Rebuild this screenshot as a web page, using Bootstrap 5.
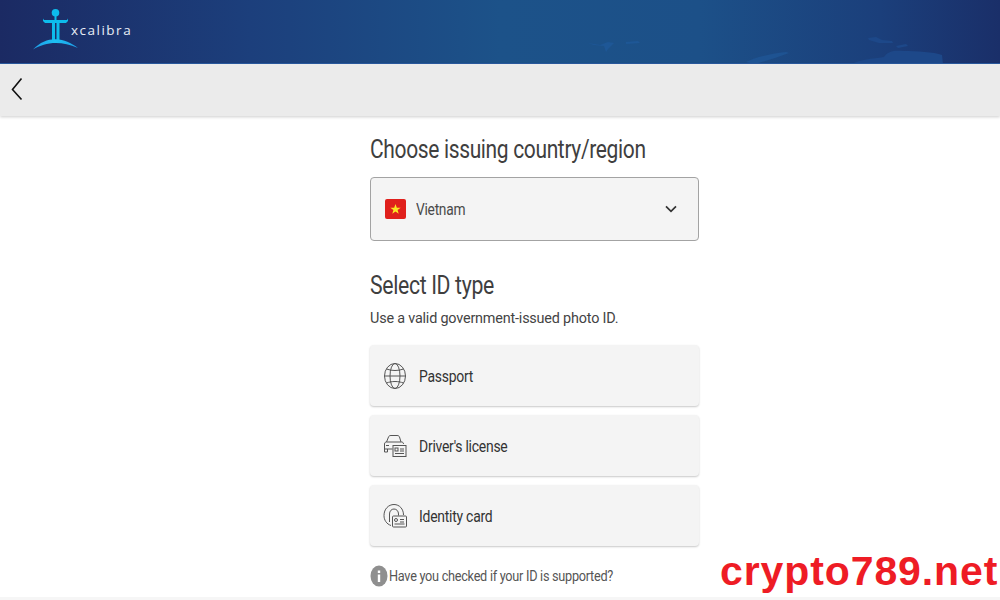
<!DOCTYPE html>
<html lang="en">
<head>
    <meta charset="UTF-8">
    <meta name="viewport" content="width=device-width, initial-scale=1.0">
    <title>Choose ID type</title>
    <link href="https://cdn.jsdelivr.net/npm/bootstrap@5.3.1/dist/css/bootstrap.min.css" rel="stylesheet">
    <style>
        html, body { height: 100%; overflow: hidden; }
        body { font-family: Roboto, "Open Sans", sans-serif; color: #3c3c3c; background: #fff; }
        .top-banner { height: 64px; background: linear-gradient(90deg, #1b2a63 0%, #1c3f7c 25%, #1c5289 50%, #1c5088 70%, #1b3f7b 88%, #1a2f69 100%); border-bottom: 1px solid #2a5aa0; overflow: hidden; }
        .brand-mark { margin-left: 32px; margin-top: 8px; }
        .brand-name { color: #e8eef6; font-family: "Open Sans", sans-serif; font-size: 13.5px; letter-spacing: 1.5px; margin-left: -11px; margin-top: 20px; }
        .banner-map { margin-left: auto; }
        .back-bar { height: 52px; background: #ebebeb; box-shadow: 0 1px 3px rgba(0,0,0,.2); padding-left: 11px; }
        .back-arrow { margin-bottom: 2px; }
        .id-column { width: 329px; margin-left: 370px; }
        .id-title { font-size: 25px; font-weight: 400; letter-spacing: -.42px; line-height: 32px; color: #3f3f3f; margin: 0; transform-origin: left center; white-space: nowrap; }
        .first-title { margin-top: 18px; transform: scaleX(.84); }
        .country-select { height: 64px; margin-top: 11px; background: #f4f4f4; border: 1px solid #a3a3a3; border-radius: 4px; padding: 0 21px 0 14px; font-size: 16px; letter-spacing: -.3px; color: #4a4a4a; }
        .flag-gap { margin-right: 10px; }
        .country-name { transform: scaleX(.86); transform-origin: left center; padding-top: 2px; }
        .second-title { margin-top: 29px; transform: scaleX(.85); }
        .id-hint { font-size: 15px; letter-spacing: -.2px; line-height: 20px; margin-top: 6px; color: #444; transform: scaleX(.96); transform-origin: left center; white-space: nowrap; }
        .id-options { margin-top: 17px; gap: 9px; }
        .id-option { height: 61px; background: #f4f4f4; border-radius: 4px; box-shadow: 0 1px 2px rgba(0,0,0,.22); padding-left: 13px; font-size: 17px; letter-spacing: -.3px; color: #333; gap: 12px; }
        .option-label { display: inline-block; transform: scaleX(.82); transform-origin: left center; padding-top: 3px; }
        .option-icon { width: 24px; height: 26px; flex: none; }
        .support-row { margin-top: 19px; font-size: 14px; letter-spacing: -.3px; color: #555; gap: 1px; line-height: 20px; }
        .support-text { display: inline-block; transform: scaleX(.907); transform-origin: left center; white-space: nowrap; }
        .info-dot { width: 18px; height: 22px; flex: none; }
        .page-end { position: absolute; left: 0; right: 0; bottom: 0; height: 3px; background: #f6f6f6; }
        .site-stamp { position: absolute; left: 720px; top: 548px; font-family: "Liberation Sans", sans-serif; font-weight: 700; font-size: 41px; line-height: 46px; letter-spacing: .9px; color: #ee1c25; background: #fff; white-space: nowrap; }
    </style>
</head>
<body>
    <header class="top-banner d-flex">
        <svg class="brand-mark" width="50" height="44" viewBox="0 0 50 44">
            <defs>
                <linearGradient id="swoop" x1="0" x2="1"><stop offset="0" stop-color="#1e9be8"/><stop offset=".5" stop-color="#1cc0f2"/><stop offset="1" stop-color="#1e9be8"/></linearGradient>
            </defs>
            <circle cx="23.500" cy="4.800" r="3.800" fill="#0dbcec"/>
            <rect x="22.500" y="7" width="2" height="6" fill="#0dbcec"/>
            <path d="M11 10.500l1 1.600h23l1-1.600v2.500l-2 2H13l-2-2z" fill="#0dbcec"/>
            <rect x="20" y="15" width="3" height="17" fill="#0dbcec"/>
            <rect x="24.500" y="15" width="3" height="17" fill="#0dbcec"/>
            <path d="M1 41.500C8 34 16 31 24 31.200 32 31.400 39 34.500 46 40 38 36.500 31 35 24 35 15 35 8 37.500 1 41.500z" fill="url(#swoop)"/>
        </svg>
        <span class="brand-name">xcalibra</span>
        <svg class="banner-map" width="420" height="64" viewBox="0 0 420 64">
            <path d="M8 43l12 2 8-3 6 1-6 6-2 3-2-6-10-1zM46 42l12-1 2 2-14 1z" fill="#1e5796"/>
            <path d="M166 62c10-5 24-8 40-10l3 1-14 5-20 6z" fill="#1e5392"/>
            <path d="M288 38l8-1 6 3 10 1 1 2h-14l-10-3zM316 46l10-2 2 2-10 2zM272 64c6-4 18-5 32-7 4-6 10-7 20-6 12 0 30 1 38 4l1 9z" fill="#1d4889"/>
        </svg>
    </header>
    <div class="back-bar d-flex align-items-center">
        <svg class="back-arrow" width="12" height="24" viewBox="0 0 12 24"><path d="M10.500 1.500L1.500 12.500l9 10" fill="none" stroke="#111" stroke-width="1.600"/></svg>
    </div>
    <main class="id-column">
        <h1 class="id-title first-title">Choose issuing country/region</h1>
        <div class="country-select d-flex align-items-center">
            <svg width="21" height="20" viewBox="0 0 21 20" class="flag-gap flex-shrink-0"><rect width="21" height="20" rx="2" fill="#e0201c"/><path d="M10.500 5l1.300 3.700h3.900l-3.100 2.300 1.100 3.800-3.200-2.300-3.200 2.300 1.100-3.800-3.100-2.300h3.900z" fill="#fbe625"/></svg>
            <span class="country-name flex-grow-1">Vietnam</span>
            <svg width="12" height="8" viewBox="0 0 12 8"><path d="M1 1.300l5 5 5-5" fill="none" stroke="#333" stroke-width="1.700"/></svg>
        </div>
        <h2 class="id-title second-title">Select ID type</h2>
        <p class="id-hint mb-0">Use a valid government-issued photo ID.</p>
        <div class="id-options d-flex flex-column">
            <div class="id-option d-flex align-items-center">
                <svg class="option-icon" viewBox="0 0 24 26" fill="none" stroke="#555" stroke-width="1"><ellipse cx="12" cy="13" rx="10.500" ry="12.500"/><ellipse cx="12" cy="13" rx="5" ry="12.500"/><path d="M1.500 13h21M3.500 6c5 2 12 2 17 0M3.500 20c5-2 12-2 17 0"/></svg>
                <span class="option-label">Passport</span>
            </div>
            <div class="id-option d-flex align-items-center">
                <svg class="option-icon" viewBox="0 0 24 26" fill="none" stroke="#555" stroke-width="1"><path d="M3.500 9l2-5c.4-1 1-1.500 2.500-1.500h6c1.500 0 2.100.5 2.500 1.500l1.500 5M1.500 16v-5c0-1.500 1-2 2-2h15c1 0 2 .5 2 2M1.500 16h8M1.500 16v3h3v-3M3 12.500h3"/><rect x="10" y="12.500" width="13" height="11" fill="#f4f4f4"/><rect x="12" y="15" width="3" height="3"/><path d="M12 20.500h9M17 16h4M17 18h4"/></svg>
                <span class="option-label">Driver's license</span>
            </div>
            <div class="id-option d-flex align-items-center">
                <svg class="option-icon" viewBox="0 0 24 26" fill="none" stroke="#555" stroke-width="1"><path d="M8 22.500C3.500 21 1 17 1 12.500 1 6 5.500 1.500 11 1.500S20.500 6 20.500 12M6.500 19v-8c0-3 2-5 4.500-5s4.500 2 4.500 5v1.500"/><rect x="9.500" y="13" width="14" height="11" rx="1" fill="#f4f4f4"/><circle cx="13" cy="17" r="1.500"/><path d="M11.500 21h10M17 16.500h4M17 19h4"/></svg>
                <span class="option-label">Identity card</span>
            </div>
        </div>
        <div class="support-row d-flex align-items-center">
            <svg class="info-dot" viewBox="0 0 18 22"><ellipse cx="9" cy="11" rx="8.500" ry="10.500" fill="#8f8f8f"/><rect x="7.800" y="9.500" width="2.400" height="7.500" fill="#fff"/><rect x="7.800" y="5.500" width="2.400" height="2.500" fill="#fff"/></svg>
            <span class="support-text">Have you checked if your ID is supported?</span>
        </div>
    </main>
    <div class="page-end"></div>
    <div class="site-stamp">crypto789.net</div>
    <script src="https://cdn.jsdelivr.net/npm/bootstrap@5.3.1/dist/js/bootstrap.bundle.min.js"></script>
</body>
</html>
